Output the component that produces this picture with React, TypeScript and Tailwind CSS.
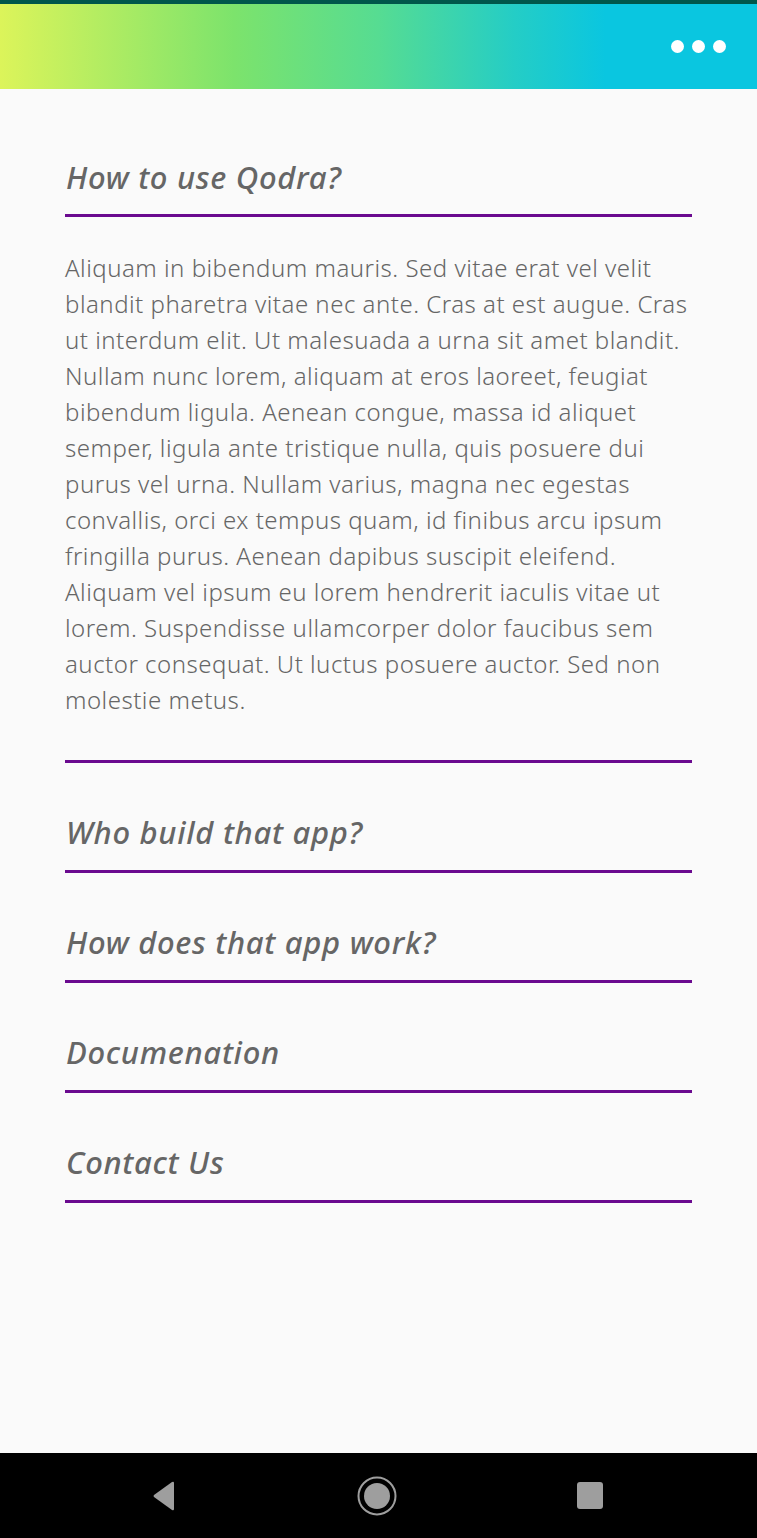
import React from "react";

const bodyLines = [
  "Aliquam in bibendum mauris. Sed vitae erat vel velit",
  "blandit pharetra vitae nec ante. Cras at est augue. Cras",
  "ut interdum elit. Ut malesuada a urna sit amet blandit.",
  "Nullam nunc lorem, aliquam at eros laoreet, feugiat",
  "bibendum ligula. Aenean congue, massa id aliquet",
  "semper, ligula ante tristique nulla, quis posuere dui",
  "purus vel urna. Nullam varius, magna nec egestas",
  "convallis, orci ex tempus quam, id finibus arcu ipsum",
  "fringilla purus. Aenean dapibus suscipit eleifend.",
  "Aliquam vel ipsum eu lorem hendrerit iaculis vitae ut",
  "lorem. Suspendisse ullamcorper dolor faucibus sem",
  "auctor consequat. Ut luctus posuere auctor. Sed non",
  "molestie metus.",
];

const questions = [
  "Who build that app?",
  "How does that app work?",
  "Documenation",
  "Contact Us",
];

const headingClass =
  "h-[36px] text-[31px] leading-[36px] italic font-medium tracking-[0.7px] text-[#666666] pl-[1px]";

export default function App() {
  return (
    <div
      className="h-[1538px] w-full flex flex-col bg-[#fafafa]"
      style={{ fontFamily: '"Noto Sans", "Open Sans", sans-serif' }}
    >
      <div className="h-[4px] bg-[#00574b]" />
      <header className="h-[85px] flex items-center justify-end pr-[31px] bg-[linear-gradient(90deg,#dcf45a_0%,#7ce36c_31%,#56dc92_50%,#24cdc6_68%,#0ac6e0_80%,#0ac6e0_100%)]">
        <div className="flex gap-[8px]">
          <span className="w-[13px] h-[13px] rounded-full bg-white" />
          <span className="w-[13px] h-[13px] rounded-full bg-white" />
          <span className="w-[13px] h-[13px] rounded-full bg-white" />
        </div>
      </header>

      <main className="flex-1 px-[65px]">
        <section className="pt-[70px]">
          <h2 className={headingClass}>How to use Qodra?</h2>
          <div className="mt-[19px] h-[3px] bg-[#6a0a8f]" />
          <p className="mt-[33px] text-[24px] leading-[36px] font-light tracking-[0.5px] text-[#666666]">
            {bodyLines.map((line, i) => (
              <span key={i} className="block whitespace-nowrap">
                {line}
              </span>
            ))}
          </p>
          <div className="mt-[42px] h-[3px] bg-[#6a0a8f]" />
        </section>

        {questions.map((q) => (
          <section key={q} className="pt-[51px]">
            <h2 className={headingClass}>{q}</h2>
            <div className="mt-[20px] h-[3px] bg-[#6a0a8f]" />
          </section>
        ))}
      </main>

      <nav className="h-[85px] bg-black flex items-center">
        <div className="w-full flex items-center justify-between pl-[152px] pr-[154px]">
          <svg width="24" height="30" viewBox="0 0 24 30">
            <path
              d="M22 2 L22 28 Q22 30 20 29 L2 16 Q1 15 2 14 L20 1 Q22 0 22 2 Z"
              fill="#9e9e9e"
            />
          </svg>
          <svg width="40" height="40" viewBox="0 0 40 40">
            <circle cx="20" cy="20" r="18.5" fill="none" stroke="#9e9e9e" strokeWidth="2" />
            <circle cx="20" cy="20" r="13" fill="#9e9e9e" />
          </svg>
          <div className="w-[26px] h-[27px] rounded-[3px] bg-[#9e9e9e]" />
        </div>
      </nav>
    </div>
  );
}
